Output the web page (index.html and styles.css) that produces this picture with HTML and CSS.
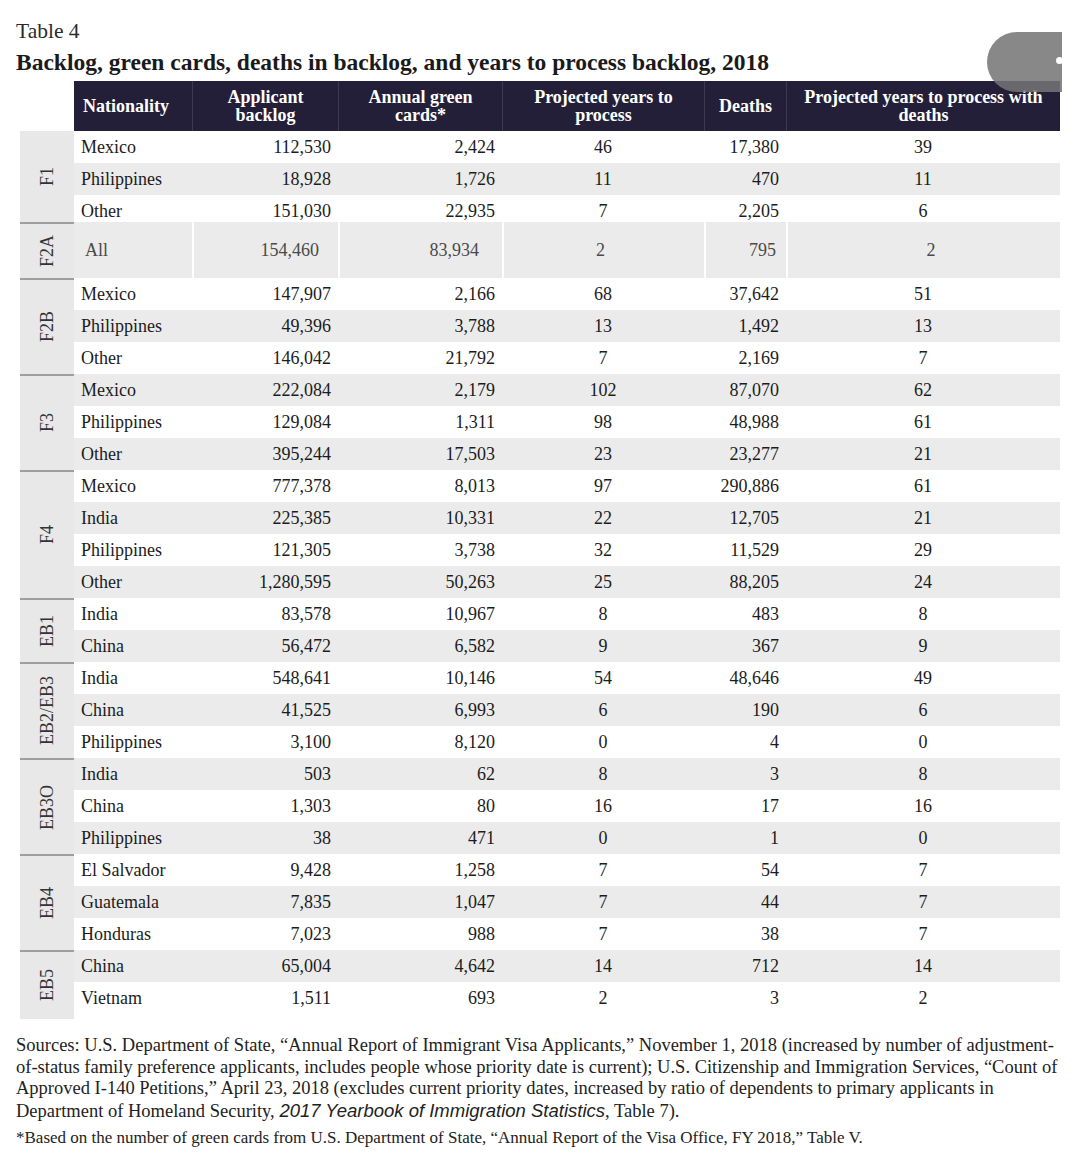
FILE: index.html
```html
<!DOCTYPE html>
<html lang="en">
<head>
<meta charset="utf-8">
<title>Table 4</title>
<link rel="stylesheet" href="styles.css">
</head>
<body>
<div class="page">
  <div class="overlay"><span class="dot"></span></div>
  <div class="kicker">Table 4</div>
  <h1 class="title">Backlog, green cards, deaths in backlog, and years to process backlog, 2018</h1>

  <div class="table">
    <div class="head">
      <div class="head-spacer"></div>
      <div class="head-cells">
        <div class="hc">Nationality</div>
        <div class="hc">Applicant<br>backlog</div>
        <div class="hc">Annual green<br>cards*</div>
        <div class="hc">Projected years to<br>process</div>
        <div class="hc">Deaths</div>
        <div class="hc">Projected years to process with<br>deaths</div>
      </div>
    </div>

    <div class="group first">
      <div class="label"><span>F1</span></div>
      <div class="rows">
        <div class="row"><div class="c n">Mexico</div><div class="c">112,530</div><div class="c">2,424</div><div class="c m">46</div><div class="c">17,380</div><div class="c m">39</div></div>
        <div class="row g"><div class="c n">Philippines</div><div class="c">18,928</div><div class="c">1,726</div><div class="c m">11</div><div class="c">470</div><div class="c m">11</div></div>
        <div class="row short"><div class="c n">Other</div><div class="c">151,030</div><div class="c">22,935</div><div class="c m">7</div><div class="c">2,205</div><div class="c m">6</div></div>
      </div>
    </div>

    <div class="group">
      <div class="label"><span>F2A</span></div>
      <div class="rows">
        <div class="row all"><div class="c n">All</div><div class="c">154,460</div><div class="c">83,934</div><div class="c m">2</div><div class="c">795</div><div class="c m">2</div></div>
      </div>
    </div>

    <div class="group">
      <div class="label"><span>F2B</span></div>
      <div class="rows">
        <div class="row"><div class="c n">Mexico</div><div class="c">147,907</div><div class="c">2,166</div><div class="c m">68</div><div class="c">37,642</div><div class="c m">51</div></div>
        <div class="row g"><div class="c n">Philippines</div><div class="c">49,396</div><div class="c">3,788</div><div class="c m">13</div><div class="c">1,492</div><div class="c m">13</div></div>
        <div class="row"><div class="c n">Other</div><div class="c">146,042</div><div class="c">21,792</div><div class="c m">7</div><div class="c">2,169</div><div class="c m">7</div></div>
      </div>
    </div>

    <div class="group">
      <div class="label"><span>F3</span></div>
      <div class="rows">
        <div class="row g"><div class="c n">Mexico</div><div class="c">222,084</div><div class="c">2,179</div><div class="c m">102</div><div class="c">87,070</div><div class="c m">62</div></div>
        <div class="row"><div class="c n">Philippines</div><div class="c">129,084</div><div class="c">1,311</div><div class="c m">98</div><div class="c">48,988</div><div class="c m">61</div></div>
        <div class="row g"><div class="c n">Other</div><div class="c">395,244</div><div class="c">17,503</div><div class="c m">23</div><div class="c">23,277</div><div class="c m">21</div></div>
      </div>
    </div>

    <div class="group">
      <div class="label"><span>F4</span></div>
      <div class="rows">
        <div class="row"><div class="c n">Mexico</div><div class="c">777,378</div><div class="c">8,013</div><div class="c m">97</div><div class="c">290,886</div><div class="c m">61</div></div>
        <div class="row g"><div class="c n">India</div><div class="c">225,385</div><div class="c">10,331</div><div class="c m">22</div><div class="c">12,705</div><div class="c m">21</div></div>
        <div class="row"><div class="c n">Philippines</div><div class="c">121,305</div><div class="c">3,738</div><div class="c m">32</div><div class="c">11,529</div><div class="c m">29</div></div>
        <div class="row g"><div class="c n">Other</div><div class="c">1,280,595</div><div class="c">50,263</div><div class="c m">25</div><div class="c">88,205</div><div class="c m">24</div></div>
      </div>
    </div>

    <div class="group">
      <div class="label"><span>EB1</span></div>
      <div class="rows">
        <div class="row"><div class="c n">India</div><div class="c">83,578</div><div class="c">10,967</div><div class="c m">8</div><div class="c">483</div><div class="c m">8</div></div>
        <div class="row g"><div class="c n">China</div><div class="c">56,472</div><div class="c">6,582</div><div class="c m">9</div><div class="c">367</div><div class="c m">9</div></div>
      </div>
    </div>

    <div class="group">
      <div class="label"><span>EB2/EB3</span></div>
      <div class="rows">
        <div class="row"><div class="c n">India</div><div class="c">548,641</div><div class="c">10,146</div><div class="c m">54</div><div class="c">48,646</div><div class="c m">49</div></div>
        <div class="row g"><div class="c n">China</div><div class="c">41,525</div><div class="c">6,993</div><div class="c m">6</div><div class="c">190</div><div class="c m">6</div></div>
        <div class="row"><div class="c n">Philippines</div><div class="c">3,100</div><div class="c">8,120</div><div class="c m">0</div><div class="c">4</div><div class="c m">0</div></div>
      </div>
    </div>

    <div class="group">
      <div class="label"><span>EB3O</span></div>
      <div class="rows">
        <div class="row g"><div class="c n">India</div><div class="c">503</div><div class="c">62</div><div class="c m">8</div><div class="c">3</div><div class="c m">8</div></div>
        <div class="row"><div class="c n">China</div><div class="c">1,303</div><div class="c">80</div><div class="c m">16</div><div class="c">17</div><div class="c m">16</div></div>
        <div class="row g"><div class="c n">Philippines</div><div class="c">38</div><div class="c">471</div><div class="c m">0</div><div class="c">1</div><div class="c m">0</div></div>
      </div>
    </div>

    <div class="group">
      <div class="label"><span>EB4</span></div>
      <div class="rows">
        <div class="row"><div class="c n">El Salvador</div><div class="c">9,428</div><div class="c">1,258</div><div class="c m">7</div><div class="c">54</div><div class="c m">7</div></div>
        <div class="row g"><div class="c n">Guatemala</div><div class="c">7,835</div><div class="c">1,047</div><div class="c m">7</div><div class="c">44</div><div class="c m">7</div></div>
        <div class="row"><div class="c n">Honduras</div><div class="c">7,023</div><div class="c">988</div><div class="c m">7</div><div class="c">38</div><div class="c m">7</div></div>
      </div>
    </div>

    <div class="group">
      <div class="label"><span>EB5</span></div>
      <div class="rows">
        <div class="row g"><div class="c n">China</div><div class="c">65,004</div><div class="c">4,642</div><div class="c m">14</div><div class="c">712</div><div class="c m">14</div></div>
        <div class="row last"><div class="c n">Vietnam</div><div class="c">1,511</div><div class="c">693</div><div class="c m">2</div><div class="c">3</div><div class="c m">2</div></div>
      </div>
    </div>
  </div>

  <div class="notes">
    <span class="ln">Sources: U.S. Department of State, “Annual Report of Immigrant Visa Applicants,” November 1, 2018 (increased by number of adjustment-</span>
    <span class="ln">of-status family preference applicants, includes people whose priority date is current); U.S. Citizenship and Immigration Services, “Count of</span>
    <span class="ln">Approved I-140 Petitions,” April 23, 2018 (excludes current priority dates, increased by ratio of dependents to primary applicants in</span>
    <span class="ln">Department of Homeland Security, <i class="sans">2017 Yearbook of Immigration Statistics</i>, Table 7).</span>
  </div>
  <div class="fn">*Based on the number of green cards from U.S. Department of State, “Annual Report of the Visa Office, FY 2018,” Table V.</div>
</div>
</body>
</html>
```

FILE: styles.css
```css
html, body {
  margin: 0;
  padding: 0;
  background: #ffffff;
}

body {
  font-family: "Liberation Serif", "Times New Roman", serif;
  color: #1c1c1c;
}

.page {
  position: relative;
  width: 1080px;
  height: 1163px;
  padding: 21px 0 0 16px;
  box-sizing: border-box;
  overflow: hidden;
}

.overlay {
  position: absolute;
  left: 987px;
  top: 32px;
  width: 75px;
  height: 60px;
  border-radius: 30px 0 0 30px;
  background: rgba(117, 117, 117, 0.86);
}

.overlay .dot {
  position: absolute;
  right: -1px;
  top: 25px;
  width: 7px;
  height: 7px;
  border-radius: 50%;
  background: #ffffff;
}

.kicker {
  font-size: 21.5px;
  line-height: 20px;
  color: #2a2a2a;
}

.title {
  margin: 11px 0 0;
  font-size: 23.5px;
  line-height: 21px;
  font-weight: bold;
  color: #1a1a1a;
}

.table {
  margin: 8px 0 0 4px;
  width: 1040px;
}

.head {
  display: flex;
  height: 50px;
}

.head-spacer {
  width: 54px;
  flex: none;
}

.head-cells,
.row {
  display: grid;
  grid-template-columns: 118px 146px 164px 202px 82px 274px;
}

.head-cells {
  flex: 1;
  background: #241f38;
  color: #ffffff;
  font-weight: bold;
  font-size: 18px;
  line-height: 18px;
}

.hc {
  display: flex;
  align-items: center;
  justify-content: center;
  text-align: center;
  border-left: 1px solid #3d3853;
}

.hc:first-child {
  border-left: none;
  justify-content: flex-start;
  padding-left: 9px;
}

.group {
  display: flex;
}

.label {
  width: 54px;
  flex: none;
  background: #e8e8e8;
  border-top: 2px solid #9e9e9e;
  box-sizing: border-box;
  display: flex;
  align-items: center;
  justify-content: center;
}

.group.first .label {
  border-top: none;
}

.label span {
  writing-mode: vertical-rl;
  transform: rotate(180deg);
  font-size: 18px;
  line-height: 20px;
  color: #333333;
}

.rows {
  flex: 1;
}

.row {
  height: 32px;
  align-items: center;
  font-size: 18px;
  line-height: 20px;
}

.row.short {
  height: 27px;
  padding-top: 5px;
  box-sizing: border-box;
}

.row.last {
  height: 37px;
  padding-bottom: 5px;
  box-sizing: border-box;
}

.row.g {
  background: #ebebeb;
}

.c {
  padding: 0 7px;
  text-align: right;
  white-space: nowrap;
}

.c.n {
  text-align: left;
}

.c.m {
  text-align: center;
}

.row.all {
  height: 56px;
  align-items: stretch;
  background: #ebebeb;
  color: #4a4a4a;
}

.row.all .c {
  display: flex;
  align-items: center;
  justify-content: flex-end;
  border-left: 2px solid #ffffff;
}

.row.all .c:nth-child(1) { justify-content: flex-start; padding-left: 11px; border-left: none; }
.row.all .c:nth-child(2) { padding-right: 19px; }
.row.all .c:nth-child(3) { padding-right: 23px; }
.row.all .c:nth-child(4) { justify-content: center; padding-right: 14px; }
.row.all .c:nth-child(5) { padding-right: 10px; }
.row.all .c:nth-child(6) { justify-content: center; padding-left: 21px; }

.notes {
  margin-top: 16px;
  font-size: 18.5px;
  line-height: 21.7px;
  color: #222222;
}

.notes .ln {
  display: block;
  white-space: nowrap;
}

.sans {
  font-family: "Liberation Sans", Arial, sans-serif;
  font-style: italic;
}

.fn {
  margin-top: 5px;
  font-size: 17px;
  line-height: 20px;
  color: #222222;
  white-space: nowrap;
}
```
